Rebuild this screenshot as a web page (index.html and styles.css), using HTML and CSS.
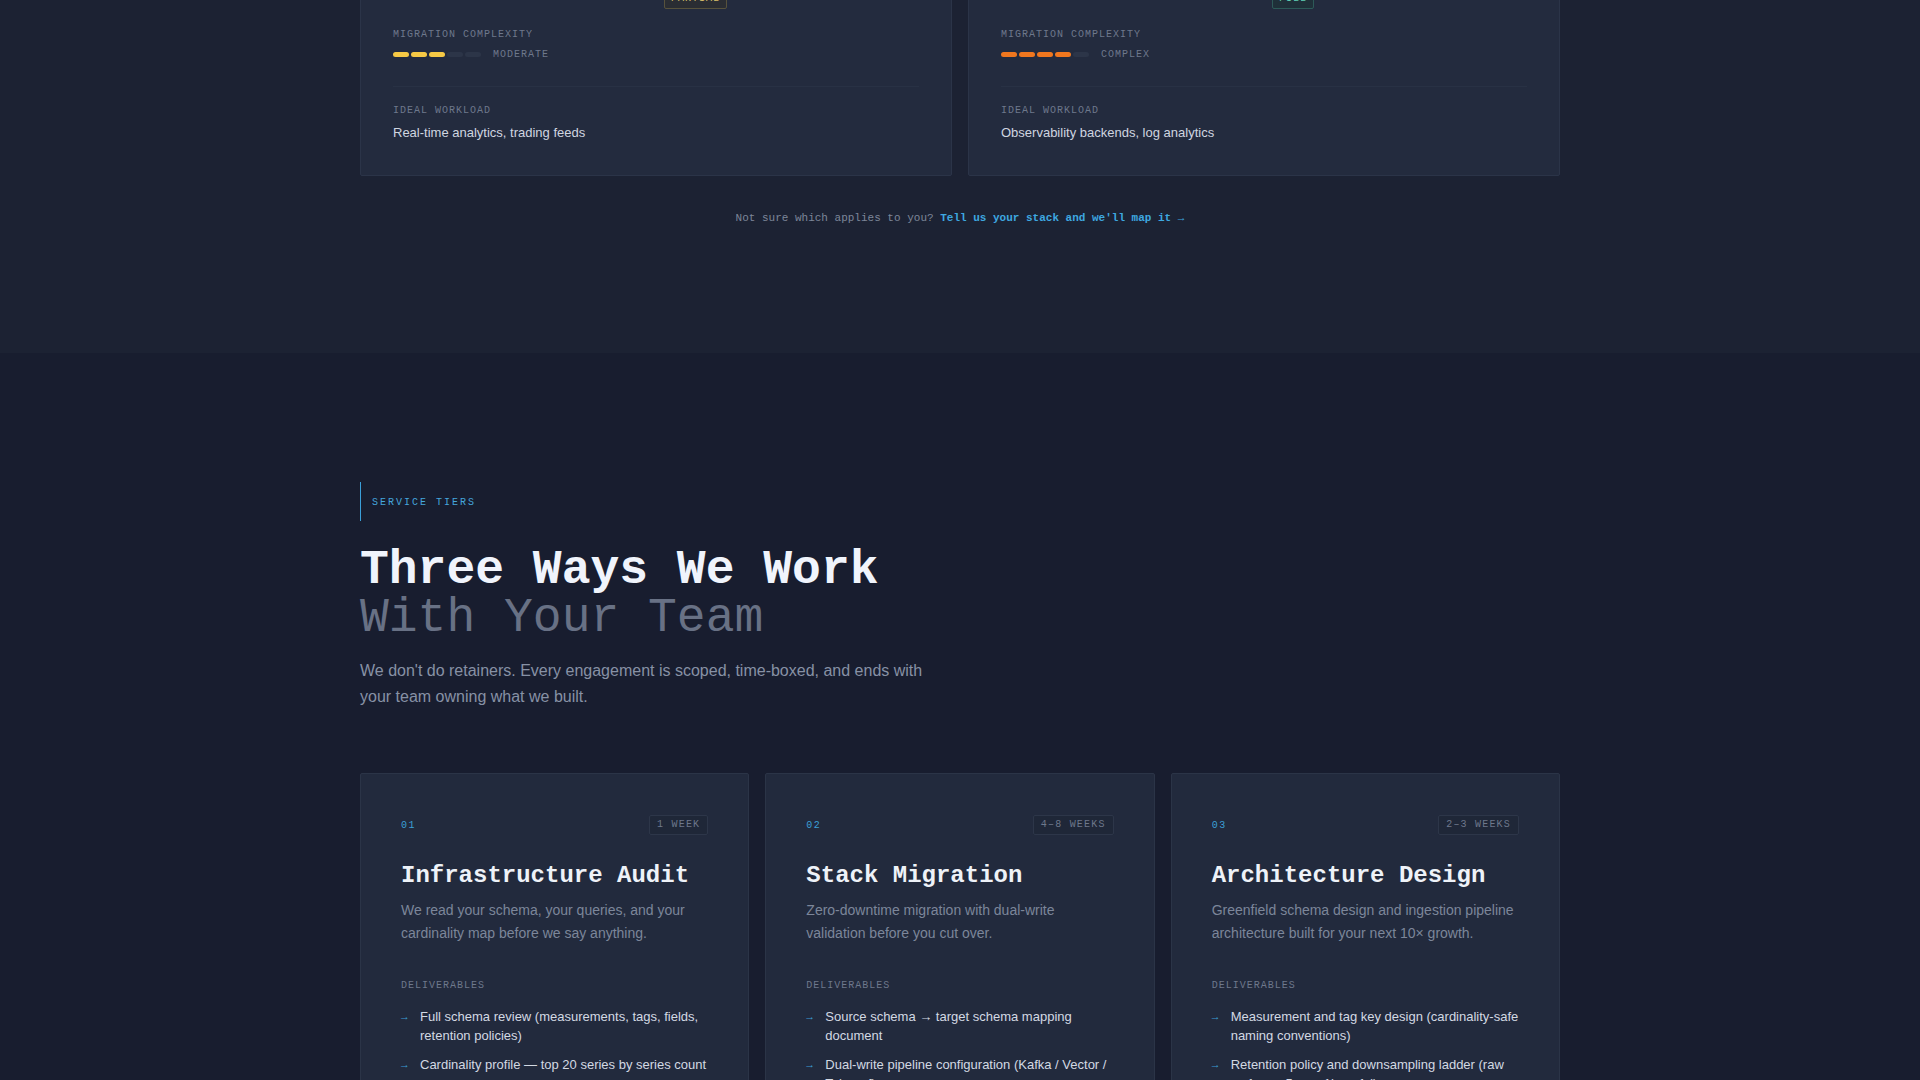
FILE: index.html
```html
<!DOCTYPE html>
<html lang="en">
  <head>
    <meta charset="UTF-8" />
    <meta name="viewport" content="width=device-width, initial-scale=1.0" />
    <title>Services</title>
    <link rel="stylesheet" href="styles.css">
  </head>

  <body>
    <section class="paths">
      <div class="wrap">
        <div class="path-grid">
          <article class="path-card">
            <h3 class="path-title">Streaming Market Data</h3>
            <div class="path-stats">
              <div class="stat">
                <span class="label">Query layer</span>
                <span class="stat-value">Native</span>
              </div>
              <div class="stat">
                <span class="label">Compatibility</span>
                <span class="tag tag-partial">Partial</span>
              </div>
            </div>
            <div class="complexity">
              <span class="label">Migration complexity</span>
              <div class="meter">
                <div class="bars moderate">
                  <i class="on"></i><i class="on"></i><i class="on"></i><i></i><i></i>
                </div>
                <span class="meter-text">Moderate</span>
              </div>
            </div>
            <div class="workload">
              <span class="label">Ideal workload</span>
              <p>Real-time analytics, trading feeds</p>
            </div>
          </article>

          <article class="path-card">
            <h3 class="path-title">Metrics and Logs</h3>
            <div class="path-stats">
              <div class="stat">
                <span class="label">Query layer</span>
                <span class="stat-value">Rewritten</span>
              </div>
              <div class="stat">
                <span class="label">Compatibility</span>
                <span class="tag tag-full">Full</span>
              </div>
            </div>
            <div class="complexity">
              <span class="label">Migration complexity</span>
              <div class="meter">
                <div class="bars complex">
                  <i class="on"></i><i class="on"></i><i class="on"></i><i class="on"></i><i></i>
                </div>
                <span class="meter-text">Complex</span>
              </div>
            </div>
            <div class="workload">
              <span class="label">Ideal workload</span>
              <p>Observability backends, log analytics</p>
            </div>
          </article>
        </div>

        <p class="paths-note">
          Not sure which applies to you?
          <a href="#contact">Tell us your stack and we'll map it &rarr;</a>
        </p>
      </div>
    </section>

    <section class="tiers">
      <div class="wrap">
        <span class="eyebrow">Service tiers</span>
        <h2 class="tiers-title">
          Three Ways We Work
          <span class="dim">With Your Team</span>
        </h2>
        <p class="lede">
          We don't do retainers. Every engagement is scoped, time-boxed, and
          ends with your team owning what we built.
        </p>

        <div class="tier-grid">
          <article class="tier">
            <div class="tier-head">
              <span class="tier-num">01</span>
              <span class="tier-time">1 Week</span>
            </div>
            <h3>Infrastructure Audit</h3>
            <p class="tier-desc">
              We read your schema, your queries, and your cardinality map
              before we say anything.
            </p>
            <span class="label">Deliverables</span>
            <ul class="deliverables">
              <li>Full schema review (measurements, tags, fields, retention policies)</li>
              <li>Cardinality profile — top 20 series by series count</li>
              <li>Query latency report with the ten slowest dashboards</li>
              <li>Written findings and a prioritised fix list</li>
            </ul>
          </article>

          <article class="tier">
            <div class="tier-head">
              <span class="tier-num">02</span>
              <span class="tier-time">4–8 Weeks</span>
            </div>
            <h3>Stack Migration</h3>
            <p class="tier-desc">
              Zero-downtime migration with dual-write validation before you
              cut over.
            </p>
            <span class="label">Deliverables</span>
            <ul class="deliverables">
              <li>Source schema → target schema mapping document</li>
              <li>Dual-write pipeline configuration (Kafka / Vector / Telegraf)</li>
              <li>Backfill jobs with row-count and checksum validation</li>
              <li>Cutover runbook and rollback plan</li>
            </ul>
          </article>

          <article class="tier">
            <div class="tier-head">
              <span class="tier-num">03</span>
              <span class="tier-time">2–3 Weeks</span>
            </div>
            <h3>Architecture Design</h3>
            <p class="tier-desc">
              Greenfield schema design and ingestion pipeline architecture
              built for your next 10× growth.
            </p>
            <span class="label">Deliverables</span>
            <ul class="deliverables">
              <li>Measurement and tag key design (cardinality-safe naming conventions)</li>
              <li>Retention policy and downsampling ladder (raw →&nbsp;1m →&nbsp;5m →&nbsp;1h →&nbsp;1d)</li>
              <li>Ingestion topology with capacity estimates</li>
              <li>Architecture decision records for your team</li>
            </ul>
          </article>
        </div>
      </div>
    </section>
  </body>
</html>
```

FILE: styles.css
```css
body {
  margin: 0;
  background-color: #181d2f;
  font-family: "Liberation Sans", Arial, sans-serif;
}

.wrap {
  width: 1200px;
  margin: 0 auto;
}

.label {
  display: block;
  font-family: "Liberation Mono", monospace;
  font-size: 10px;
  line-height: 14px;
  letter-spacing: 0.1em;
  text-transform: uppercase;
  color: #6e788c;
}

/* migration paths */

.paths {
  background-color: #1c2233;
  padding-bottom: 125px;
}

.path-grid {
  display: grid;
  grid-template-columns: 1fr 1fr;
  gap: 16px;
  margin-top: -110px; /* page is scrolled past the card headers */
}

.path-card {
  background-color: #232b3e;
  border: 1px solid #2b3448;
  border-radius: 2px;
  padding: 32px;
}

.path-title {
  margin: 0 0 20px;
  font-family: "Liberation Mono", monospace;
  font-size: 15px;
  line-height: 24px;
  color: #eef2f8;
}

.path-stats {
  display: grid;
  grid-template-columns: 1fr 1fr;
  align-items: start;
  gap: 16px;
}

.stat {
  display: flex;
  flex-direction: column;
  align-items: flex-start;
  gap: 2px;
}

.stat-value {
  font-size: 13px;
  line-height: 16px;
  color: #d0d6e0;
}

.tag {
  margin-top: 6px;
  font-family: "Liberation Mono", monospace;
  font-size: 10px;
  line-height: 14px;
  letter-spacing: 0.1em;
  text-transform: uppercase;
  padding: 2px 6px;
  border: 1px solid;
  border-radius: 2px;
}

.tag-partial {
  color: #d9c06a;
  border-color: #57523c;
  background-color: #2a2d33;
}

.tag-full {
  color: #5fcfb5;
  border-color: #2d5a58;
  background-color: #1f3039;
}

.complexity {
  margin-top: 19px;
  padding-bottom: 25px;
  border-bottom: 1px solid #283144;
}

.meter {
  display: flex;
  align-items: center;
  gap: 12px;
  margin-top: 5px;
  height: 14px;
}

.bars {
  display: flex;
  gap: 2px;
}

.bars i {
  width: 16px;
  height: 5px;
  border-radius: 3px;
  background-color: #2c3548;
}

.bars.moderate .on {
  background-color: #f6c945;
}

.bars.complex .on {
  background-color: #f0771f;
}

.meter-text {
  font-family: "Liberation Mono", monospace;
  font-size: 10px;
  letter-spacing: 0.1em;
  text-transform: uppercase;
  color: #6e788c;
}

.workload {
  padding-top: 17px;
}

.workload p {
  margin: 5px 0 0;
  font-size: 13px;
  line-height: 20px;
  color: #d0d6e0;
}

.paths-note {
  margin: 32px 0 0;
  text-align: center;
  font-family: "Liberation Mono", monospace;
  font-size: 11px;
  line-height: 20px;
  color: #7c8699;
}

.paths-note a {
  color: #3ea8e0;
  font-weight: bold;
  text-decoration: none;
}

/* service tiers */

.tiers {
  padding: 129px 0 120px;
}

.eyebrow {
  display: inline-block;
  border-left: 1px solid #3a9fd9;
  padding: 13px 0 11px 11px;
  font-family: "Liberation Mono", monospace;
  font-size: 10px;
  line-height: 15px;
  letter-spacing: 0.2em;
  text-transform: uppercase;
  color: #45a6dd;
}

.tiers-title {
  margin: 25px 0 0;
  font-family: "Liberation Mono", monospace;
  font-size: 48px;
  line-height: 48px;
  font-weight: bold;
  color: #f0f4fc;
}

.tiers-title .dim {
  display: block;
  font-weight: normal;
  color: #687185;
}

.lede {
  margin: 16px 0 0;
  max-width: 580px;
  font-size: 16px;
  line-height: 25.6px;
  color: #8791a5;
}

.tier-grid {
  display: grid;
  grid-template-columns: repeat(3, 1fr);
  gap: 16px;
  margin-top: 64px;
}

.tier {
  background-color: #222a3d;
  border: 1px solid #2b3447;
  border-radius: 2px;
  padding: 41px 40px 40px;
}

.tier-head {
  display: flex;
  justify-content: space-between;
  align-items: center;
}

.tier-num {
  font-family: "Liberation Mono", monospace;
  font-size: 10px;
  letter-spacing: 0.15em;
  color: #3b9fd6;
}

.tier-time {
  font-family: "Liberation Mono", monospace;
  font-size: 10px;
  line-height: 14px;
  letter-spacing: 0.12em;
  text-transform: uppercase;
  padding: 2px 7px;
  border: 1px solid #2d3649;
  border-radius: 2px;
  background-color: #1f2738;
  color: #6e788c;
}

.tier h3 {
  margin: 26px 0 0;
  font-family: "Liberation Mono", monospace;
  font-size: 24px;
  line-height: 30px;
  color: #eef2f8;
}

.tier-desc {
  margin: 8px 0 0;
  font-size: 14px;
  line-height: 23px;
  color: #7c869a;
}

.tier .label {
  margin-top: 34px;
}

.deliverables {
  list-style: none;
  margin: 15px -4px 0 0;
  padding: 0;
  display: flex;
  flex-direction: column;
  gap: 11px;
}

.deliverables li {
  display: grid;
  grid-template-columns: 19px 1fr;
  font-size: 13px;
  line-height: 18.5px;
  color: #d3d9e3;
}

.deliverables li::before {
  content: "→";
  font-family: "Liberation Mono", monospace;
  font-size: 11px;
  color: #3b9fd6;
}
```
